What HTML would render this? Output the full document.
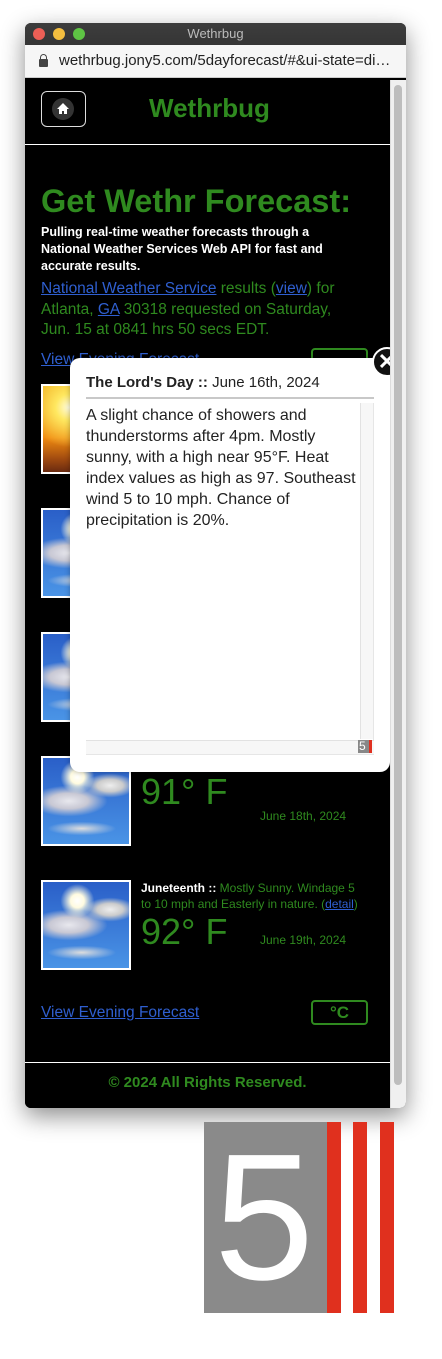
<!DOCTYPE html>
<html><head><meta charset="utf-8"><style>
*{margin:0;padding:0;box-sizing:border-box}
body{width:442px;height:1359px;background:#fff;position:relative;overflow:hidden;font-family:"Liberation Sans",Arial,sans-serif}
.win{position:absolute;left:25px;top:23px;width:381px;height:1085px;border-radius:6px;box-shadow:0 8px 24px rgba(0,0,0,.45);overflow:hidden;background:#000}
.title{height:22px;background:linear-gradient(#3d3d3d,#353535);color:#bbb;font-size:13px;text-align:center;line-height:22px;position:relative}
.dot{position:absolute;top:5px;width:12px;height:12px;border-radius:50%}
.addr{height:33px;background:#f6f6f6;border-bottom:1px solid #ccc;font-size:15px;color:#222;line-height:32px;padding-left:34px;position:relative;white-space:nowrap;overflow:hidden}
.lock{position:absolute;left:14px;top:14px;width:9px;height:8px;background:#444;border-radius:1px}
.lock:before{content:"";position:absolute;left:1px;top:-5px;width:7px;height:7px;border:1.5px solid #444;border-bottom:none;border-radius:4px 4px 0 0;box-sizing:border-box}
.page{position:absolute;left:0;top:57px;width:365px;height:1028px;background:#000}
.sb{position:absolute;left:365px;top:57px;width:16px;height:1028px;background:#f0f0f0;border-left:1px solid #ddd;z-index:5}
.sb i{position:absolute;left:3px;top:5px;width:8px;height:1000px;background:#bdbdbd;border-radius:4px}
.g{color:#2f8a1f}
a{color:#2f5fd0}
.img{position:absolute;left:16px;width:90px;height:90px;border:2px solid #fff}
.sky{background:radial-gradient(circle at 40% 22%,#fff 0,#fffbe0 8%,rgba(255,255,255,0) 20%),radial-gradient(ellipse 45% 18% at 30% 50%,#e8e8ee 0,#c8c8d4 50%,rgba(200,200,210,0) 100%),radial-gradient(ellipse 30% 14% at 78% 32%,#eee 0,#ccc 50%,rgba(200,200,200,0) 100%),radial-gradient(ellipse 40% 8% at 45% 82%,#ddd 0,rgba(220,220,220,0) 100%),linear-gradient(#2a5fc8,#4a94e6)}
.sunset{background:radial-gradient(circle at 30% 25%,#fffde0 0,#ffe860 15%,rgba(255,200,50,0) 45%),linear-gradient(#f0b020,#f08a10 60%,#a04a10 85%,#6a2a10)}
.row{position:absolute;left:116px;width:220px}
.row .d{font-size:12px;line-height:16px}
.row .t{font-size:36px;line-height:40px}
.row .dt{position:absolute;left:119px;font-size:12px}
</style></head><body>
<div class="win">
 <div class="title"><span class="dot" style="left:8px;background:#ed5f56"></span><span class="dot" style="left:28px;background:#f4be3f"></span><span class="dot" style="left:48px;background:#5ec444"></span>Wethrbug</div>
 <div class="addr"><span class="lock"></span>wethrbug.jony5.com/5dayforecast/#&amp;ui-state=di…</div>
 <div class="page">
  <div style="position:absolute;left:16px;top:11px;width:45px;height:36px;border:1px solid #ddd;border-radius:6px"></div>
  <div style="position:absolute;left:27px;top:18px;width:22px;height:22px;border-radius:50%;background:#333"><svg width="22" height="22" viewBox="0 0 22 22"><path d="M11 5 L5 11 H7 V16 H10 V13 H12 V16 H15 V11 H17 Z" fill="#fff"/></svg></div>
  <div class="g" style="position:absolute;left:124px;top:13px;font-size:26px;font-weight:bold">Wethrbug</div>
  <div style="position:absolute;left:0;top:64px;width:365px;height:1px;background:#fff"></div>
  <div class="g" style="position:absolute;left:16px;top:103px;font-size:32.5px;font-weight:bold;white-space:nowrap">Get Wethr Forecast:</div>
  <div style="position:absolute;left:16px;top:144px;width:320px;color:#fff;font-size:12.5px;font-weight:bold;line-height:17px">Pulling real-time weather forecasts through a National Weather Services Web API for fast and accurate results.</div>
  <div class="g" style="position:absolute;left:16px;top:199px;width:320px;font-size:15.5px;line-height:20.5px"><a href="#">National Weather Service</a> results (<a href="#">view</a>) for Atlanta, <a href="#">GA</a> 30318 requested on Saturday, Jun. 15 at 0841 hrs 50 secs EDT.</div>
  <div style="position:absolute;left:16px;top:271px;font-size:15.5px"><a href="#">View Evening Forecast</a></div>
  <div style="position:absolute;left:286px;top:268px;width:57px;height:25px;border:2px solid #2f8a1f;border-radius:4px"></div>
  <div class="img sunset" style="top:304px"></div>
  <div class="img sky" style="top:428px"></div>
  <div class="img sky" style="top:552px"></div>
  <div class="img sky" style="top:676px"></div>
  <div class="row g" style="top:676px"><div class="d">10 mph and Easterly in nature. (<a href="#">detail</a>)</div><div class="t">91° F</div><div class="dt" style="top:53px">June 18th, 2024</div></div>
  <div class="img sky" style="top:800px"></div>
  <div class="row g" style="top:800px"><div class="d"><b style="color:#fff">Juneteenth ::</b> Mostly Sunny. Windage 5 to 10 mph and Easterly in nature. (<a href="#">detail</a>)</div><div class="t">92° F</div><div class="dt" style="top:53px">June 19th, 2024</div></div>
  <div style="position:absolute;left:16px;top:924px;font-size:15.5px"><a href="#">View Evening Forecast</a></div>
  <div class="g" style="position:absolute;left:286px;top:920px;width:57px;height:25px;border:2px solid #2f8a1f;border-radius:4px;text-align:center;font-weight:bold;font-size:17px;line-height:21px">°C</div>
  <div style="position:absolute;left:0;top:982px;width:365px;height:1px;background:#fff"></div>
  <div class="g" style="position:absolute;left:0;top:994px;width:365px;text-align:center;font-size:15px;font-weight:bold">© 2024 All Rights Reserved.</div>
 </div>
 <div style="position:absolute;left:45px;top:335px;width:320px;height:414px;background:#fff;border-radius:10px;box-shadow:0 0 6px rgba(0,0,0,.3);z-index:2">
  <div style="position:absolute;left:16px;top:16px;font-size:15px;color:#222;white-space:nowrap"><b>The Lord's Day ::</b> June 16th, 2024</div>
  <div style="position:absolute;left:16px;top:39px;width:288px;height:2px;background:#c8c8c8"></div>
  <div style="position:absolute;left:16px;top:45px;width:288px;height:352px;border:1px solid #e6e6e6;border-top:none;border-left:none;background:#fff">
   <div style="position:absolute;right:0;top:0;width:13px;height:336px;background:#f7f7f7;border-left:1px solid #e2e2e2"></div>
   <div style="position:absolute;left:0;bottom:0;width:288px;height:14px;background:#f7f7f7;border-top:1px solid #e2e2e2"></div>
   <div style="position:absolute;right:1px;bottom:1px;width:14px;height:13px;background:#888;color:#fff;font-size:12px;line-height:13px;padding-left:1px">5<span style="position:absolute;right:0;top:0;width:3px;height:13px;background:#e03020"></span></div>
   <div style="position:absolute;left:0;top:2px;width:276px;font-size:16px;line-height:21px;color:#222">A slight chance of showers and thunderstorms after 4pm. Mostly sunny, with a high near 95°F. Heat index values as high as 97. Southeast wind 5 to 10 mph. Chance of precipitation is 20%.</div>
  </div>
 </div>
 <div style="position:absolute;left:347px;top:324px;width:30px;height:30px;border-radius:50%;background:#111;border:2px solid #fff;color:#fff;font-size:22px;font-weight:bold;text-align:center;line-height:25px;z-index:3">✕</div>
 <div class="sb"><i></i></div>
</div>
<div style="position:absolute;left:204px;top:1122px;width:123px;height:191px;background:#8a8a8a;color:#fff;font-size:180px;line-height:191px;text-indent:10px;overflow:hidden">5</div>
<div style="position:absolute;left:327px;top:1122px;width:14px;height:191px;background:#e0301e"></div>
<div style="position:absolute;left:353px;top:1122px;width:14px;height:191px;background:#e0301e"></div>
<div style="position:absolute;left:380px;top:1122px;width:14px;height:191px;background:#e0301e"></div>
</body></html>
